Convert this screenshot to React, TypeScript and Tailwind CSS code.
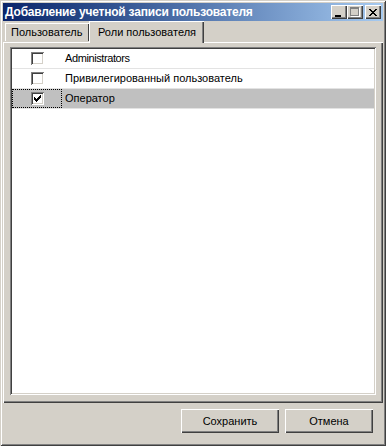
const button = "shadow-[inset_1px_1px_0_#ffffff,inset_-1px_-1px_0_#404040,inset_-2px_-2px_0_#808080]";
const sunken = "shadow-[inset_1px_1px_0_#808080,inset_-1px_-1px_0_#ffffff,inset_2px_2px_0_#404040,inset_-2px_-2px_0_#d4d0c8]";

const font = { fontFamily: '"Liberation Sans", Arial, sans-serif' };

function CaptionButton({ children }: { children: React.ReactNode }) {
  return (
    <div className={`w-[16px] h-[14px] bg-[#d4d0c8] ${button} flex items-center justify-center`}>
      {children}
    </div>
  );
}

function CheckBox({ checked }: { checked?: boolean }) {
  return (
    <div className={`w-[13px] h-[13px] bg-white ${sunken} relative`}>
      {checked && (
        <svg width="7" height="7" viewBox="0 0 7 7" className="absolute left-[3px] top-[3px]" shapeRendering="crispEdges">
          <path d="M6 0h1v3H6zM5 1h1v3H5zM4 2h1v3H4zM3 3h1v3H3zM2 4h1v3H2zM1 3h1v3H1zM0 2h1v3H0z" fill="#000" />
        </svg>
      )}
    </div>
  );
}

const roles = [
  { name: "Administrators", checked: false, tight: true },
  { name: "Привилегированный пользователь", checked: false },
  { name: "Оператор", checked: true, selected: true },
];

export default function App() {
  return (
    <div
      className="w-[386px] h-[446px] bg-[#d4d0c8] p-[3px] flex flex-col text-[11px] text-black shadow-[inset_1px_1px_0_#d4d0c8,inset_-1px_-1px_0_#404040,inset_2px_2px_0_#ffffff,inset_-2px_-2px_0_#808080]"
      style={font}
    >
      {/* title bar */}
      <div className="h-[18px] shrink-0 flex items-center pl-[2px] pr-[2px] bg-gradient-to-r from-[#0a246a] to-[#a6caf0]">
        <span className="text-white font-bold text-[12px] tracking-[-0.2px] flex-1">Добавление учетной записи пользователя</span>
        <div className="flex items-center">
          <CaptionButton>
            <svg width="8" height="7" viewBox="0 0 8 7" shapeRendering="crispEdges" className="mt-[2px] ml-[-1px]">
              <rect x="0" y="5" width="6" height="2" fill="#000" />
            </svg>
          </CaptionButton>
          <CaptionButton>
            <svg width="10" height="10" viewBox="0 0 10 10" shapeRendering="crispEdges">
              <path d="M0 0h9v2H0zM0 2h1v7H0zM8 2h1v7H8zM0 8h9v1H0z" fill="#808080" />
              <path d="M1 9h9v1H1zM9 1h1v8H9z" fill="#fff" />
            </svg>
          </CaptionButton>
          <div className="w-[2px]" />
          <CaptionButton>
            <svg width="8" height="7" viewBox="0 0 8 7" shapeRendering="crispEdges">
              <path d="M0 0h2v1H0zM6 0h2v1H6zM1 1h2v1H1zM5 1h2v1H5zM2 2h4v1H2zM3 3h2v1H3zM2 4h4v1H2zM1 5h2v1H1zM5 5h2v1H5zM0 6h2v1H0zM6 6h2v1H6z" fill="#000" />
            </svg>
          </CaptionButton>
        </div>
      </div>

      {/* tabs */}
      <div className="h-[21px] shrink-0 flex items-end pl-[2px] relative z-10">
        <div className="h-[18px] w-[84px] pl-[6px] flex items-center bg-[#d4d0c8] shadow-[inset_1px_1px_0_#ffffff,inset_-1px_0_0_#404040] mb-[1px]">
          <span>Пользователь</span>
        </div>
        <div className="h-[22px] w-[115px] -mb-[1px] pl-[9px] flex items-start pt-[3px] bg-[#d4d0c8] shadow-[inset_1px_1px_0_#ffffff,inset_-1px_0_0_#404040,inset_-2px_0_0_#808080]">
          <span>Роли пользователя</span>
        </div>
      </div>

      {/* tab page */}
      <div className="flex-1 flex flex-col bg-[#d4d0c8] pt-[5px] pb-[8px] px-[7px] shadow-[inset_1px_1px_0_#ffffff,inset_-1px_-1px_0_#404040,inset_-2px_-2px_0_#808080]">
        <div className={`flex-1 bg-white p-[2px] ${sunken}`}>
          {roles.map((r) => (
            <div
              key={r.name}
              className={`h-[20px] flex border-b border-[#e3e3e3] ${r.selected ? "bg-[#c0c0c0]" : ""}`}
            >
              <div
                className={`w-[50px] shrink-0 flex items-center justify-center border ${r.selected ? "border-dotted border-black" : "border-transparent"}`}
              >
                <CheckBox checked={r.checked} />
              </div>
              <div className={`flex items-center pl-[3px] ${r.tight ? "tracking-[-0.4px]" : ""}`}>{r.name}</div>
            </div>
          ))}
        </div>
      </div>

      {/* footer */}
      <div className="h-[40px] shrink-0 flex items-start justify-end gap-[6px] pt-[6px] pr-[10px]">
        <button className={`w-[98px] h-[24px] bg-[#d4d0c8] ${button}`}>Сохранить</button>
        <button className={`w-[88px] h-[24px] bg-[#d4d0c8] ${button}`}>Отмена</button>
      </div>
    </div>
  );
}
